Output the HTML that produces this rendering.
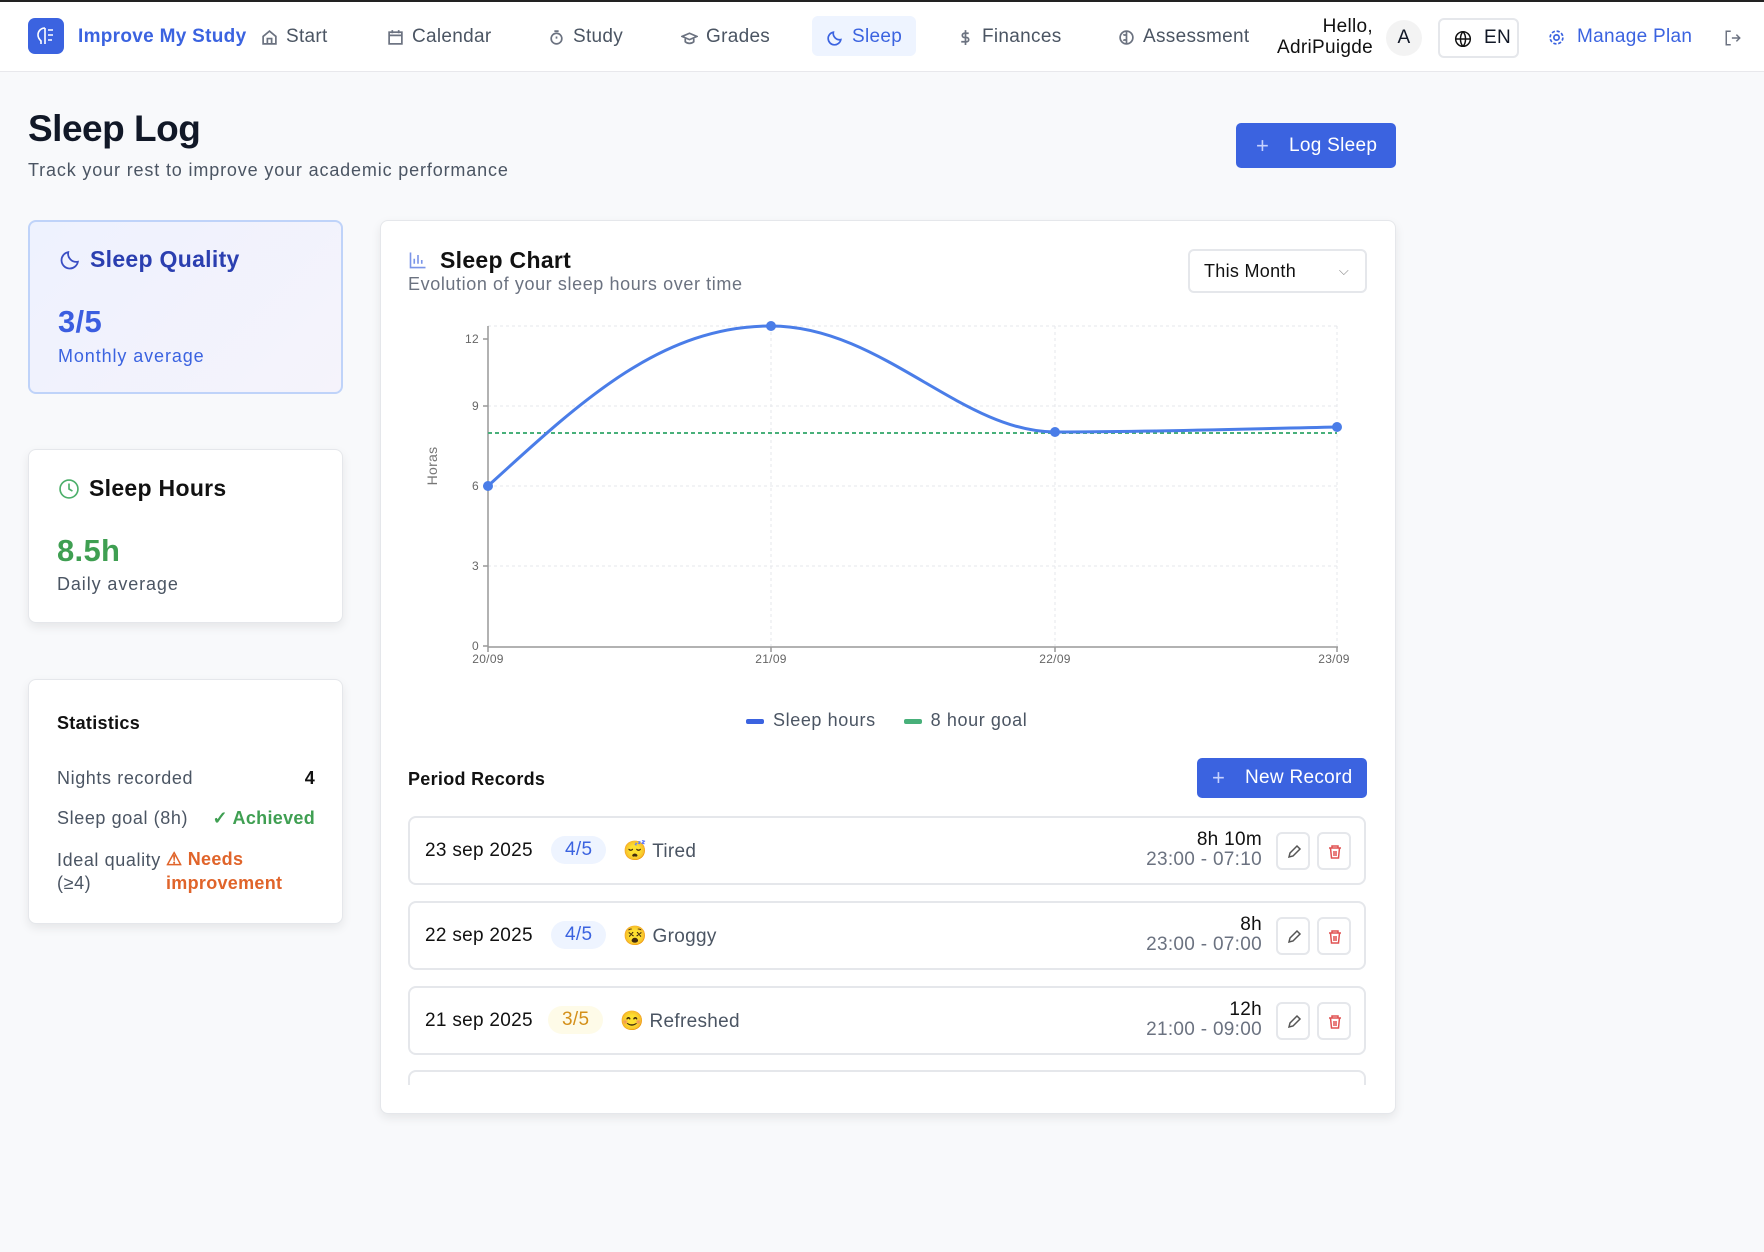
<!DOCTYPE html>
<html><head><meta charset="utf-8"><style>
*{box-sizing:border-box;margin:0;padding:0}
body{width:1764px;height:1252px;background:#f8f9fb;font-family:"Liberation Sans",sans-serif;color:#111827;position:relative;overflow:hidden;letter-spacing:0.3px}
.abs{position:absolute}
.nav{position:absolute;left:0;top:0;width:1764px;height:72px;background:#fff;border-bottom:1px solid #e8e8ec;border-top:2px solid #222}
.ni{position:absolute;top:24px;font-size:19px;color:#4b5563;display:flex;align-items:center;gap:8px;white-space:nowrap}
.ni svg{width:17px;height:17px;stroke:#6b7280;fill:none;stroke-width:1.6}
.card{position:absolute;background:#fff;border:1px solid #e5e7eb;border-radius:8px;box-shadow:0 4px 10px rgba(0,0,0,.08)}
.rec{position:absolute;left:408px;width:958px;height:69px;border:2px solid #e5e7eb;border-radius:8px;background:#fff}
.rec .d{position:absolute;left:15px;top:22px;font-size:19px;color:#111}
.badge{position:absolute;top:18px;height:28px;padding:0 14px;border-radius:14px;font-size:19px;line-height:28px}
.mood{position:absolute;top:21px;font-size:19px;color:#4b5563}
.dur{position:absolute;right:102px;top:12px;text-align:right;font-size:19px;color:#111;line-height:20px}
.dur span{display:block;color:#6b7280}
.ib{position:absolute;top:14px;width:34px;height:38px;border:2px solid #e5e7eb;border-radius:6px}
.ib svg{position:absolute;left:8px;top:10px;width:16px;height:16px;fill:none;stroke-width:1.5}
</style></head><body>
<div class="nav">
 <div class="abs" style="left:28px;top:16px;width:36px;height:36px;background:#3b63e0;border-radius:7px">
  <svg width="36" height="36" viewBox="0 0 36 36" fill="none" stroke="#fff" stroke-width="1.6"><path d="M17 10c-4 0-7 3-7 7 0 3 2 5 3 6v3M17 10v16M20 12h5M20 17h5M20 22h4"/></svg></div>
 <div class="abs" style="left:78px;top:24px;font-size:19px;font-weight:bold;color:#3b63e0">Improve My Study</div>
 <div class="ni" style="left:261px"><svg viewBox="0 0 16 16"><path d="M2 7l6-5 6 5v7H2z M6 14V9h4v5"/></svg>Start</div>
 <div class="ni" style="left:387px"><svg viewBox="0 0 16 16"><rect x="2" y="3" width="12" height="11"/><path d="M2 6h12M5 1v3M11 1v3"/></svg>Calendar</div>
 <div class="ni" style="left:548px"><svg viewBox="0 0 16 16"><circle cx="8" cy="9" r="5"/><path d="M6 2h4M8 9V7"/></svg>Study</div>
 <div class="ni" style="left:681px"><svg viewBox="0 0 16 16"><path d="M1 7l7-3 7 3-7 3z M4 9v3c2 2 6 2 8 0V9"/></svg>Grades</div>
 <div class="abs" style="left:812px;top:14px;width:104px;height:40px;background:#eef4ff;border-radius:6px"></div>
 <div class="ni" style="left:827px;color:#3b63e0"><svg viewBox="0 0 16 16" style="stroke:#3b63e0"><path d="M13 10A6 6 0 0 1 6 3a6 6 0 1 0 7 7z"/></svg>Sleep</div>
 <div class="ni" style="left:957px"><svg viewBox="0 0 16 16"><path d="M8 1v14M11 4H7a2 2 0 0 0 0 4h2a2 2 0 0 1 0 4H4"/></svg>Finances</div>
 <div class="ni" style="left:1118px"><svg viewBox="0 0 16 16"><circle cx="8" cy="8" r="6"/><path d="M8 2v12M5 5c1 1 2 1 3 0M5 11c1-1 2-1 3 0"/></svg>Assessment</div>
 <div class="abs" style="left:1266px;top:14px;width:107px;text-align:right;font-size:19px;line-height:21px;color:#111">Hello,<br>AdriPuigde</div>
 <div class="abs" style="left:1386px;top:18px;width:36px;height:36px;border-radius:50%;background:#f3f3f3;text-align:center;line-height:36px;font-size:19px">A</div>
 <div class="abs" style="left:1438px;top:16px;width:81px;height:40px;border:2px solid #e5e7eb;border-radius:6px;font-size:19px;line-height:36px;padding-left:44px">EN
  <svg class="abs" style="left:14px;top:10px" width="18" height="18" viewBox="0 0 16 16" fill="none" stroke="#111" stroke-width="1.3"><circle cx="8" cy="8" r="6.5"/><path d="M1.5 8h13M8 1.5c-3 3-3 10 0 13M8 1.5c3 3 3 10 0 13"/></svg></div>
 <div class="ni" style="left:1548px;color:#3b63e0;gap:12px"><svg viewBox="0 0 16 16" style="stroke:#3b63e0"><circle cx="8" cy="8" r="2.5"/><circle cx="8" cy="8" r="6" stroke-dasharray="3 1.7"/></svg>Manage Plan</div>
 <svg class="abs" style="left:1724px;top:27px" width="18" height="18" viewBox="0 0 16 16" fill="none" stroke="#6b7280" stroke-width="1.3"><path d="M6 2H2v12h4M7 8h7M11 5l3 3-3 3"/></svg>
</div>

<div class="abs" style="left:28px;top:108px;font-size:37px;font-weight:bold;color:#111827;letter-spacing:-0.5px">Sleep Log</div>
<div class="abs" style="left:28px;top:160px;font-size:18px;color:#4b5563;letter-spacing:0.85px">Track your rest to improve your academic performance</div>
<div class="abs" style="left:1236px;top:123px;width:160px;height:45px;background:#3b63e0;border-radius:5px;color:#fff;font-size:19px;line-height:45px;padding-left:53px"><span style="position:absolute;left:20px;font-size:22px;color:#c7d2fe">+</span>Log Sleep</div>

<div class="card" style="left:28px;top:220px;width:315px;height:174px;background:linear-gradient(135deg,#eef2fe,#f5f3fb);border:2px solid #bfd3f9;box-shadow:none">
 <svg class="abs" style="left:30px;top:26px" width="22" height="22" viewBox="0 0 16 16" fill="none" stroke="#3b4fc4" stroke-width="1.3"><path d="M13 10A6 6 0 0 1 6 3a6 6 0 1 0 7 7z"/></svg>
 <div class="abs" style="left:60px;top:24px;font-size:23px;font-weight:bold;color:#2b3fb0">Sleep Quality</div>
 <div class="abs" style="left:28px;top:82px;font-size:31px;font-weight:bold;color:#3b5de0">3/5</div>
 <div class="abs" style="left:28px;top:124px;font-size:18px;color:#3b63e0;letter-spacing:0.9px">Monthly average</div>
</div>
<div class="card" style="left:28px;top:449px;width:315px;height:174px">
 <svg class="abs" style="left:29px;top:28px" width="22" height="22" viewBox="0 0 16 16" fill="none" stroke="#4caf6a" stroke-width="1.2"><circle cx="8" cy="8" r="6.5"/><path d="M8 4v4l2.5 1.5"/></svg>
 <div class="abs" style="left:60px;top:25px;font-size:23px;font-weight:bold;color:#111">Sleep Hours</div>
 <div class="abs" style="left:28px;top:83px;font-size:31px;font-weight:bold;color:#3f9f52">8.5h</div>
 <div class="abs" style="left:28px;top:124px;font-size:18px;color:#4b5563;letter-spacing:0.9px">Daily average</div>
</div>
<div class="card" style="left:28px;top:679px;width:315px;height:245px">
 <div class="abs" style="left:28px;top:33px;font-size:18px;font-weight:bold;color:#111">Statistics</div>
 <div class="abs" style="left:28px;top:88px;font-size:18px;color:#4b5563;letter-spacing:0.6px">Nights recorded</div>
 <div class="abs" style="right:27px;top:88px;font-size:18px;font-weight:bold;color:#111">4</div>
 <div class="abs" style="left:28px;top:128px;font-size:18px;color:#4b5563;letter-spacing:0.6px">Sleep goal (8h)</div>
 <div class="abs" style="right:27px;top:128px;font-size:18px;font-weight:bold;color:#3f9f52">✓ Achieved</div>
 <div class="abs" style="left:28px;top:169px;font-size:18px;line-height:23px;color:#4b5563;letter-spacing:0.6px">Ideal quality<br>(≥4)</div>
 <div class="abs" style="left:137px;top:167px;font-size:18px;line-height:24px;font-weight:bold;color:#e0642a">⚠ Needs<br>improvement</div>
</div>

<div class="card" style="left:380px;top:220px;width:1016px;height:894px">
 <svg class="abs" style="left:27px;top:29px" width="20" height="20" viewBox="0 0 16 16" fill="none" stroke="#7b95e8" stroke-width="1.3"><path d="M2 2v12h12M5 11V7M8 11V4M11 11V8"/></svg>
 <div class="abs" style="left:59px;top:26px;font-size:23px;font-weight:bold;color:#111">Sleep Chart</div>
 <div class="abs" style="left:27px;top:53px;font-size:18px;color:#6b7280;letter-spacing:0.6px">Evolution of your sleep hours over time</div>
 <div class="abs" style="left:807px;top:28px;width:179px;height:44px;border:2px solid #e5e7eb;border-radius:6px;font-size:18px;line-height:40px;padding-left:14px;color:#111">This Month<span style="position:absolute;right:16px;top:0;color:#888;font-size:13px">⌵</span></div>
 <svg class="abs" style="left:0;top:0" width="1016" height="500" viewBox="380 220 1016 500" font-family="Liberation Sans" font-size="12" fill="#666">
  <g stroke="#e5e7eb" stroke-dasharray="3 3">
   <line x1="487" y1="325" x2="1336" y2="325"/><line x1="487" y1="405" x2="1336" y2="405"/><line x1="487" y1="485" x2="1336" y2="485"/><line x1="487" y1="565" x2="1336" y2="565"/>
   <line x1="770" y1="325" x2="770" y2="645"/><line x1="1054" y1="325" x2="1054" y2="645"/><line x1="1336" y1="325" x2="1336" y2="645"/>
  </g>
  <g stroke="#999" stroke-width="1.5"><line x1="487" y1="325" x2="487" y2="646"/><line x1="487" y1="646" x2="1337" y2="646"/>
   <path d="M482 338h5M482 405h5M482 485h5M482 565h5M482 645h5M770 646v5M1054 646v5M1336 646v5M487 646v5"/></g>
  <text x="478" y="342" text-anchor="end">12</text><text x="478" y="409" text-anchor="end">9</text><text x="478" y="489" text-anchor="end">6</text><text x="478" y="569" text-anchor="end">3</text><text x="478" y="649" text-anchor="end">0</text>
  <text x="487" y="662" text-anchor="middle">20/09</text><text x="770" y="662" text-anchor="middle">21/09</text><text x="1054" y="662" text-anchor="middle">22/09</text><text x="1333" y="662" text-anchor="middle">23/09</text>
  <text transform="translate(436,465) rotate(-90)" text-anchor="middle" font-size="14" fill="#777">Horas</text>
  <line x1="487" y1="432" x2="1336" y2="432" stroke="#48b07a" stroke-width="2" stroke-dasharray="4 3"/>
  <path d="M487 485C580 400 660 325 770 325C880 325 960 431 1054 431C1150 431 1240 428 1336 426" fill="none" stroke="#4a7de8" stroke-width="3"/>
  <g fill="#4a7de8"><circle cx="487" cy="485" r="5"/><circle cx="770" cy="325" r="5"/><circle cx="1054" cy="431" r="5"/><circle cx="1336" cy="426" r="5"/></g>
 </svg>
 <div class="abs" style="left:365px;top:489px;font-size:18px;color:#4b5563;white-space:nowrap;letter-spacing:0.6px"><span style="display:inline-block;width:18px;height:5px;background:#3b63e0;border-radius:2px;vertical-align:middle;margin-right:9px"></span>Sleep hours<span style="display:inline-block;width:18px;height:5px;background:#48b07a;border-radius:2px;vertical-align:middle;margin:0 9px 0 28px"></span>8 hour goal</div>
 <div class="abs" style="left:27px;top:548px;font-size:18px;font-weight:bold;color:#111">Period Records</div>
 <div class="abs" style="left:816px;top:537px;width:170px;height:40px;background:#3b63e0;border-radius:5px;color:#fff;font-size:19px;line-height:40px;padding-left:48px"><span style="position:absolute;left:15px;font-size:22px;color:#c7d2fe">+</span>New Record</div>
</div>

<div class="rec" style="top:816px"><div class="d">23 sep 2025</div><div class="badge" style="left:141px;background:#eef4ff;color:#3b63e0">4/5</div><div class="mood" style="left:213px">😴 Tired</div><div class="dur">8h 10m<span>23:00 - 07:10</span></div>
 <div class="ib" style="left:866px"><svg viewBox="0 0 16 16" stroke="#555"><path d="M3 13l1-4 7-7 3 3-7 7z"/></svg></div><div class="ib" style="left:907px"><svg viewBox="0 0 16 16" stroke="#e05252"><path d="M2 4h12M5 4V2h6v2M3.5 4l1 10h7l1-10M7 7v5M9 7v5"/></svg></div></div>
<div class="rec" style="top:901px"><div class="d">22 sep 2025</div><div class="badge" style="left:141px;background:#eef4ff;color:#3b63e0">4/5</div><div class="mood" style="left:213px">😵 Groggy</div><div class="dur">8h<span>23:00 - 07:00</span></div>
 <div class="ib" style="left:866px"><svg viewBox="0 0 16 16" stroke="#555"><path d="M3 13l1-4 7-7 3 3-7 7z"/></svg></div><div class="ib" style="left:907px"><svg viewBox="0 0 16 16" stroke="#e05252"><path d="M2 4h12M5 4V2h6v2M3.5 4l1 10h7l1-10M7 7v5M9 7v5"/></svg></div></div>
<div class="rec" style="top:986px"><div class="d">21 sep 2025</div><div class="badge" style="left:138px;background:#fefbe8;color:#d4901a">3/5</div><div class="mood" style="left:210px">😊 Refreshed</div><div class="dur">12h<span>21:00 - 09:00</span></div>
 <div class="ib" style="left:866px"><svg viewBox="0 0 16 16" stroke="#555"><path d="M3 13l1-4 7-7 3 3-7 7z"/></svg></div><div class="ib" style="left:907px"><svg viewBox="0 0 16 16" stroke="#e05252"><path d="M2 4h12M5 4V2h6v2M3.5 4l1 10h7l1-10M7 7v5M9 7v5"/></svg></div></div>
<div class="abs" style="left:408px;top:1070px;width:958px;height:15px;border:2px solid #e5e7eb;border-bottom:none;border-radius:8px 8px 0 0;background:#fff"></div>
</body></html>
